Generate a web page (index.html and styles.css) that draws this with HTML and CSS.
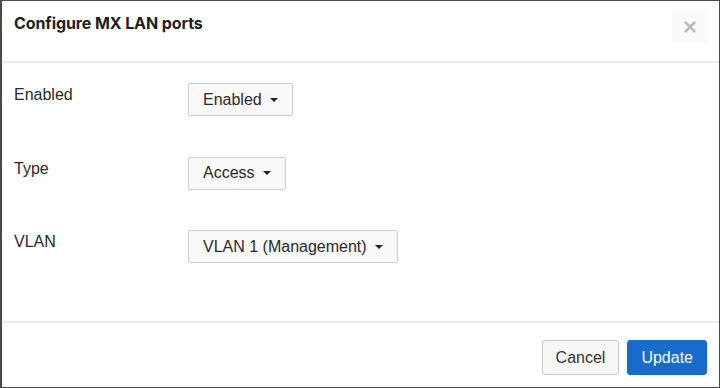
FILE: index.html
```html
<!DOCTYPE html>
<html>
<head>
<meta charset="utf-8">
<title>Configure MX LAN ports</title>
<link rel="stylesheet" href="styles.css">
</head>
<body>
<div class="modal">
	<div class="modal-header">
		<h3 class="modal-title">Configure MX LAN ports</h3>
		<button class="close" type="button">&times;</button>
	</div>
	<div class="modal-body">
		<div class="row">
			<label class="row-label">Enabled</label>
			<button class="dropdown" type="button">Enabled <span class="caret"></span></button>
		</div>
		<div class="row">
			<label class="row-label">Type</label>
			<button class="dropdown" type="button">Access <span class="caret"></span></button>
		</div>
		<div class="row">
			<label class="row-label">VLAN</label>
			<button class="dropdown" type="button">VLAN 1 (Management) <span class="caret"></span></button>
		</div>
	</div>
	<div class="modal-footer">
		<button class="btn btn-default" type="button">Cancel</button>
		<button class="btn btn-primary" type="button">Update</button>
	</div>
</div>
</body>
</html>
```
FILE: styles.css
```css
body { margin:0; font-family:"Liberation Sans", Arial, sans-serif; color:#222;}
.modal { box-sizing:border-box; width:720px; height:388px; border:1px solid #4a4a4a; border-left-width:2px; display:flex; flex-direction:column; background:#fff;}
.modal-header { box-sizing:border-box; height:62px; border-bottom:2px solid #ececec; display:flex; justify-content:space-between; align-items:flex-start; padding:0 11px 0 12px;}
.modal-title { margin:12px 0 0; font-family:Inter, "Liberation Sans", sans-serif; font-size:16px; font-weight:700; color:#1e1e1e; letter-spacing:-0.1px;}
.close { margin-top:9px; width:36px; height:33px; border:none; background:#fafafa; color:#bcbcbc; font-size:24px; font-weight:bold; font-family:"Liberation Sans", sans-serif; line-height:1; padding:0; cursor:pointer;}
.modal-body { flex:1; padding:20px 12px 0;}
.row { display:flex; align-items:flex-start; height:73.5px;}
.row-label { width:174px; padding-top:3px; font-size:16px; color:#2a2a2a;}
.dropdown { box-sizing:border-box; height:33px; padding:0 14px; border:1px solid #cfcfcf; border-radius:2px; background:#f9f9f9; font-family:"Liberation Sans", Arial, sans-serif; font-size:16px; color:#2a2a2a; display:flex; align-items:center; gap:8px;}
.caret { width:0; height:0; border-left:4px solid transparent; border-right:4px solid transparent; border-top:4px solid #222;}
.modal-footer { box-sizing:border-box; height:66px; border-top:2px solid #ececec; display:flex; justify-content:flex-end; align-items:flex-start; gap:8px; padding:17px 12px 0 0;}
.btn { box-sizing:border-box; height:35px; padding:0 13px; border-radius:3px; font-family:"Liberation Sans", Arial, sans-serif; font-size:16px;}
.btn-default { border:1px solid #c8c8c8; background:#f7f7f7; color:#333;}
.btn-primary { border:1px solid #176ccb; background:#176ccb; color:#fff;}
```
